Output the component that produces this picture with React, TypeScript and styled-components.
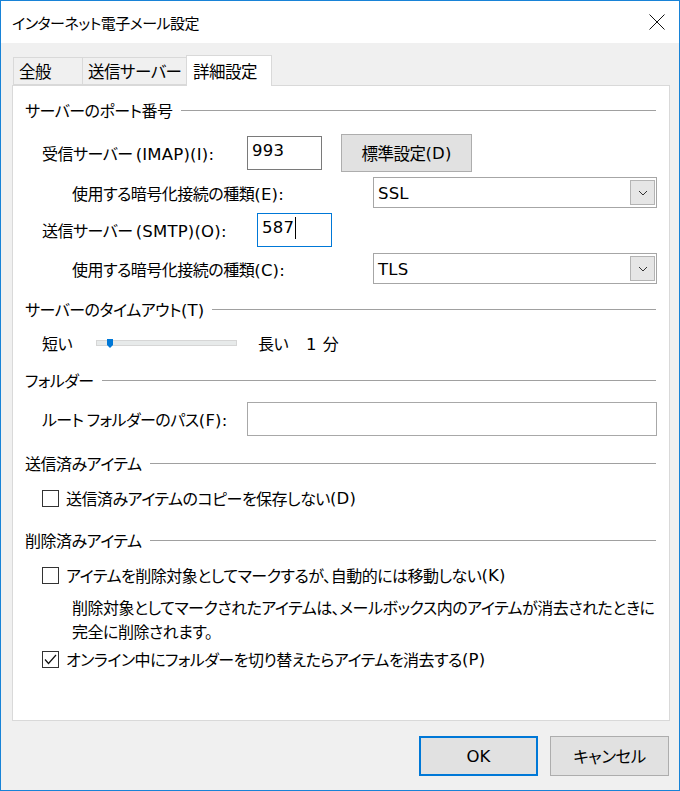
import * as React from "react";
import styled, { createGlobalStyle } from "styled-components";

const GlobalStyle = createGlobalStyle`
  body {
    margin: 0;
    background: #ffffff;
    font-family: "Noto Sans CJK JP", "Noto Sans", sans-serif;
    font-feature-settings: "palt" 1;
    color: #000;
  }
`;

const Window = styled.div`
  width: 680px;
  height: 791px;
  box-sizing: border-box;
  border: 1px solid #1883d7;
  background: #f0f0f0;
  display: flex;
  flex-direction: column;
  font-size: 16px;
  letter-spacing: -0.5px;
`;

// Latin runs: the original UI font has wide, Verdana-like Latin glyphs
const En = styled.span`
  font-family: "DejaVu Sans", "Noto Sans", sans-serif;
  font-size: 16.5px;
  letter-spacing: 0.2px;
`;

const TitleBar = styled.div`
  height: 42px;
  flex-shrink: 0;
  background: #ffffff;
  display: flex;
  align-items: center;
  justify-content: space-between;
  padding: 0 14px 0 11px;
`;

const Title = styled.div`
  font-size: 15px;
  line-height: 1;
`;

const Body = styled.div`
  flex: 1;
  display: flex;
  flex-direction: column;
  padding: 12px 9px 0 11px;
`;

const TabStrip = styled.div`
  display: flex;
  align-items: flex-end;
  height: 31px;
  margin-bottom: -1px;
  padding-left: 1px;
  position: relative;
  z-index: 1;
`;

const Tab = styled.div<{ $active?: boolean; $w: number }>`
  box-sizing: border-box;
  width: ${(p) => p.$w}px;
  height: ${(p) => (p.$active ? 31 : 28)}px;
  margin-bottom: ${(p) => (p.$active ? 0 : 1)}px;
  margin-right: -1px;
  padding-left: ${(p) => (p.$active ? 6 : 5)}px;
  display: flex;
  align-items: center;
  white-space: nowrap;
  border: 1px solid #d9d9d9;
  border-bottom: ${(p) => (p.$active ? "none" : "1px solid #d9d9d9")};
  background: ${(p) => (p.$active ? "#ffffff" : "#f0f0f0")};
  font-size: 16.5px;
  line-height: 1;
`;

const Panel = styled.div`
  height: 636px;
  box-sizing: border-box;
  background: #ffffff;
  border: 1px solid #d9d9d9;
  padding: 12px 13px 0 12px;
  display: flex;
  flex-direction: column;
`;

const SectionHeader = styled.div<{ $mt?: number }>`
  height: 24px;
  margin-top: ${(p) => p.$mt ?? 0}px;
  display: flex;
  align-items: center;
  gap: 8px;
  white-space: nowrap;
`;

const Rule = styled.div`
  flex: 1;
  height: 0;
  border-top: 1px solid #a0a0a0;
`;

const Row = styled.div<{ $h: number; $mt?: number; $indent: number }>`
  height: ${(p) => p.$h}px;
  margin-top: ${(p) => p.$mt ?? 0}px;
  padding-left: ${(p) => p.$indent}px;
  display: flex;
  align-items: center;
  white-space: nowrap;
`;

const Label = styled.div<{ $w: number }>`
  width: ${(p) => p.$w}px;
  flex-shrink: 0;
`;

const SliderCaption = styled.div`
  box-sizing: border-box;
  width: 69px;
  padding-left: 21px;
  flex-shrink: 0;
`;

const TextBox = styled.div<{ $w: number; $h: number; $focus?: boolean; $light?: boolean }>`
  box-sizing: border-box;
  width: ${(p) => p.$w}px;
  height: ${(p) => p.$h}px;
  flex-shrink: 0;
  background: #ffffff;
  border: 1px solid ${(p) => (p.$focus ? "#0078d7" : p.$light ? "#a8a8a8" : "#7a7a7a")};
  padding: 0 4px 5px 4px;
  display: flex;
  align-items: center;
`;

const Caret = styled.span`
  display: inline-block;
  width: 1px;
  height: 22px;
  background: #000;
  margin-left: 1px;
`;

const PushButton = styled.div<{ $w: number; $h: number; $default?: boolean }>`
  box-sizing: border-box;
  width: ${(p) => p.$w}px;
  height: ${(p) => p.$h}px;
  flex-shrink: 0;
  background: #e1e1e1;
  border: ${(p) => (p.$default ? "2px solid #0078d7" : "1px solid #adadad")};
  display: flex;
  align-items: center;
  justify-content: center;
  font-size: 16.5px;
`;

const Select = styled.div`
  box-sizing: border-box;
  width: 284px;
  height: 31px;
  flex-shrink: 0;
  border: 1px solid #a6a6a6;
  background: #ffffff;
  padding: 2px 1px 2px 4px;
  display: flex;
  align-items: center;
  justify-content: space-between;
`;

const SelectValue = styled.span`
  padding-bottom: 2px;
`;

const DropButton = styled.div`
  box-sizing: border-box;
  width: 25px;
  height: 25px;
  background: #e6e6e6;
  border: 1px solid #b4b4b4;
  display: flex;
  align-items: center;
  justify-content: center;
`;

const Track = styled.div`
  position: relative;
  box-sizing: border-box;
  width: 141px;
  height: 6px;
  flex-shrink: 0;
  background: #e7eaea;
  border: 1px solid #d6d6d6;
`;

const Thumb = styled.svg`
  position: absolute;
  left: 10px;
  top: -2px;
`;

const CheckBox = styled.div`
  box-sizing: border-box;
  width: 17px;
  height: 17px;
  flex-shrink: 0;
  border: 1px solid #333333;
  background: #ffffff;
  margin-right: 7px;
  display: flex;
  align-items: center;
  justify-content: center;
`;

const Description = styled.div`
  margin-top: 8px;
  padding-left: 47px;
  line-height: 24px;
  white-space: nowrap;
`;

const Footer = styled.div`
  display: flex;
  justify-content: flex-end;
  gap: 12px;
  padding: 15px 1px 0 0;
`;

const Chevron = () => (
  <svg width="10" height="6" viewBox="0 0 10 6">
    <path d="M1 1 L5 5 L9 1" fill="none" stroke="#333" strokeWidth="1" />
  </svg>
);

const Check = ({ checked }: { checked?: boolean }) => (
  <CheckBox>
    {checked && (
      <svg width="13" height="11" viewBox="0 0 13 11">
        <path d="M1 5.5 L4.5 9.5 L12 1" fill="none" stroke="#111" strokeWidth="1.2" />
      </svg>
    )}
  </CheckBox>
);

export default function App() {
  return (
    <>
      <GlobalStyle />
      <Window>
        <TitleBar>
          <Title>インターネット電子メール設定</Title>
          <svg width="16" height="16" viewBox="0 0 16 16">
            <path d="M0.5 0.5 L15.5 15.5 M15.5 0.5 L0.5 15.5" stroke="#111" strokeWidth="1" />
          </svg>
        </TitleBar>
        <Body>
          <TabStrip>
            <Tab $w={70}>全般</Tab>
            <Tab $w={105}>送信サーバー</Tab>
            <Tab $w={86} $active>
              詳細設定
            </Tab>
          </TabStrip>
          <Panel>
            <SectionHeader>
              サーバーのポート番号
              <Rule />
            </SectionHeader>
            <Row $h={38} $mt={12} $indent={17}>
              <Label $w={205}>
                受信サーバー <En>(IMAP)(I):</En>
              </Label>
              <TextBox $w={75} $h={34}>
                <En>993</En>
              </TextBox>
              <div style={{ width: 19 }} />
              <PushButton $w={131} $h={38}>
                標準設定<En>(D)</En>
              </PushButton>
            </Row>
            <Row $h={31} $mt={5} $indent={47}>
              <Label $w={301}>
                使用する暗号化接続の種類<En>(E):</En>
              </Label>
              <Select>
                <SelectValue>
                  <En>SSL</En>
                </SelectValue>
                <DropButton>
                  <Chevron />
                </DropButton>
              </Select>
            </Row>
            <Row $h={34} $mt={5} $indent={17}>
              <Label $w={215}>
                送信サーバー <En>(SMTP)(O):</En>
              </Label>
              <TextBox $w={75} $h={34} $focus>
                <En>587</En>
                <Caret />
              </TextBox>
            </Row>
            <Row $h={31} $mt={6} $indent={47}>
              <Label $w={301}>
                使用する暗号化接続の種類<En>(C):</En>
              </Label>
              <Select>
                <SelectValue>
                  <En>TLS</En>
                </SelectValue>
                <DropButton>
                  <Chevron />
                </DropButton>
              </Select>
            </Row>
            <SectionHeader $mt={13}>
              <span>
                サーバーのタイムアウト<En>(T)</En>
              </span>
              <Rule />
            </SectionHeader>
            <Row $h={24} $mt={10} $indent={17}>
              <Label $w={54}>短い</Label>
              <Track>
                <Thumb width="6" height="9" viewBox="0 0 6 9">
                  <path d="M0 0 H6 V6 L3 9 L0 6 Z" fill="#0078d7" />
                </Thumb>
              </Track>
              <SliderCaption>長い</SliderCaption>
              <span>
                <En>1</En>&nbsp;&nbsp;分
              </span>
            </Row>
            <SectionHeader $mt={13}>
              フォルダー
              <Rule />
            </SectionHeader>
            <Row $h={34} $mt={10} $indent={17}>
              <Label $w={205}>
                ルート フォルダーのパス<En>(F):</En>
              </Label>
              <TextBox $w={410} $h={34} $light />
            </Row>
            <SectionHeader $mt={15}>
              送信済みアイテム
              <Rule />
            </SectionHeader>
            <Row $h={24} $mt={11} $indent={17}>
              <Check />
              送信済みアイテムのコピーを保存しない<En>(D)</En>
            </Row>
            <SectionHeader $mt={18}>
              削除済みアイテム
              <Rule />
            </SectionHeader>
            <Row $h={24} $mt={11} $indent={17}>
              <Check />
              アイテムを削除対象としてマークするが、自動的には移動しない<En>(K)</En>
            </Row>
            <Description>
              削除対象としてマークされたアイテムは、メールボックス内のアイテムが消去されたときに
              <br />
              完全に削除されます。
            </Description>
            <Row $h={24} $mt={4} $indent={17}>
              <Check checked />
              オンライン中にフォルダーを切り替えたらアイテムを消去する<En>(P)</En>
            </Row>
          </Panel>
          <Footer>
            <PushButton $w={119} $h={40} $default>
              <En>OK</En>
            </PushButton>
            <PushButton $w={119} $h={40}>
              キャンセル
            </PushButton>
          </Footer>
        </Body>
      </Window>
    </>
  );
}
